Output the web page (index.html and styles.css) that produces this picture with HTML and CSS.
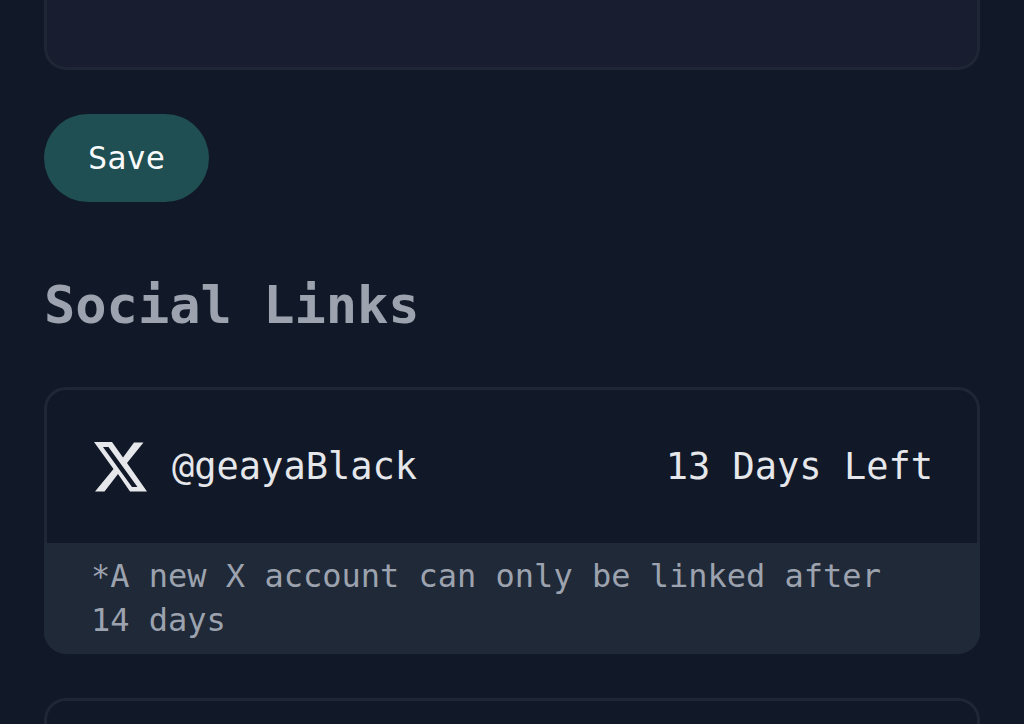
FILE: index.html
```html
<!DOCTYPE html>
<html lang="en">
<head>
  <meta charset="UTF-8" />
  <meta name="viewport" content="width=device-width, initial-scale=1" />
  <title>Profile Settings</title>
  <link rel="stylesheet" href="styles.css">
</head>
<body>
  <form class="profile-form">
    <textarea class="bio" aria-label="Bio"></textarea>
    <button class="save" type="submit">Save</button>
  </form>

  <main class="social">
    <h2>Social Links</h2>

    <section class="card">
      <div class="account">
        <svg class="logo" viewBox="0 0 53 50" aria-hidden="true">
          <path fill="currentColor" fill-rule="evenodd" d="M0 0H18L29 15.500L40 0.500H49.500L33 21L53 49.500H36L24 32L10.500 49.500H1L19.500 27ZM9 5L38 45H43.500L14.500 5Z" />
        </svg>
        <span class="handle">@geayaBlack</span>
        <span class="days">13 Days Left</span>
      </div>
      <p class="note">*A new X account can only be linked after 14 days</p>
    </section>

    <section class="card card-next"></section>
  </main>
</body>
</html>
```

FILE: styles.css
```css
* { box-sizing: border-box; }

body {
  margin: 0;
  padding: 0 44px;
  min-height: 100vh;
  display: flex;
  flex-direction: column;
  background: #111827;
  color: #e5e7eb;
  font-family: "DejaVu Sans Mono", monospace;
}

.profile-form {
  display: flex;
  flex-direction: column;
  align-items: flex-start;
  gap: 44px;
}

.bio {
  display: block;
  width: 100%;
  height: 70px;
  padding: 22px 44px;
  border: 3px solid #1f2636;
  border-top: none;
  border-radius: 0 0 22px 22px;
  background: #181d2f;
  color: inherit;
  font: inherit;
  resize: none;
}

.save {
  padding: 22px 44px;
  border: none;
  border-radius: 44px;
  background: #1f4f52;
  color: #f9fafb;
  font: inherit;
  font-size: 32px;
  line-height: 44px;
  cursor: pointer;
}

.social {
  flex: 1;
  display: flex;
  flex-direction: column;
}

h2 {
  margin: 73px 0 52px;
  color: #9ca3af;
  font-size: 52px;
  line-height: 60px;
}

.card {
  border: 3px solid #1f2636;
  border-radius: 22px;
}

.account {
  display: flex;
  align-items: center;
  padding: 48px 44px;
  font-size: 37px;
  line-height: 57px;
}

.logo {
  width: 53px;
  height: 50px;
  margin: 0 25px 0 3px;
}

.days { margin-left: auto; }

/* covers the card border on three sides */
.note {
  margin: 0 -3px -3px;
  padding: 11px 47px 12px;
  border-radius: 0 0 22px 22px;
  background: #202937;
  color: #9ca3af;
  font-size: 32px;
  line-height: 44px;
}

.card-next {
  flex: 1;
  margin-top: 44px;
  border-bottom: none;
  border-radius: 22px 22px 0 0;
}
```
